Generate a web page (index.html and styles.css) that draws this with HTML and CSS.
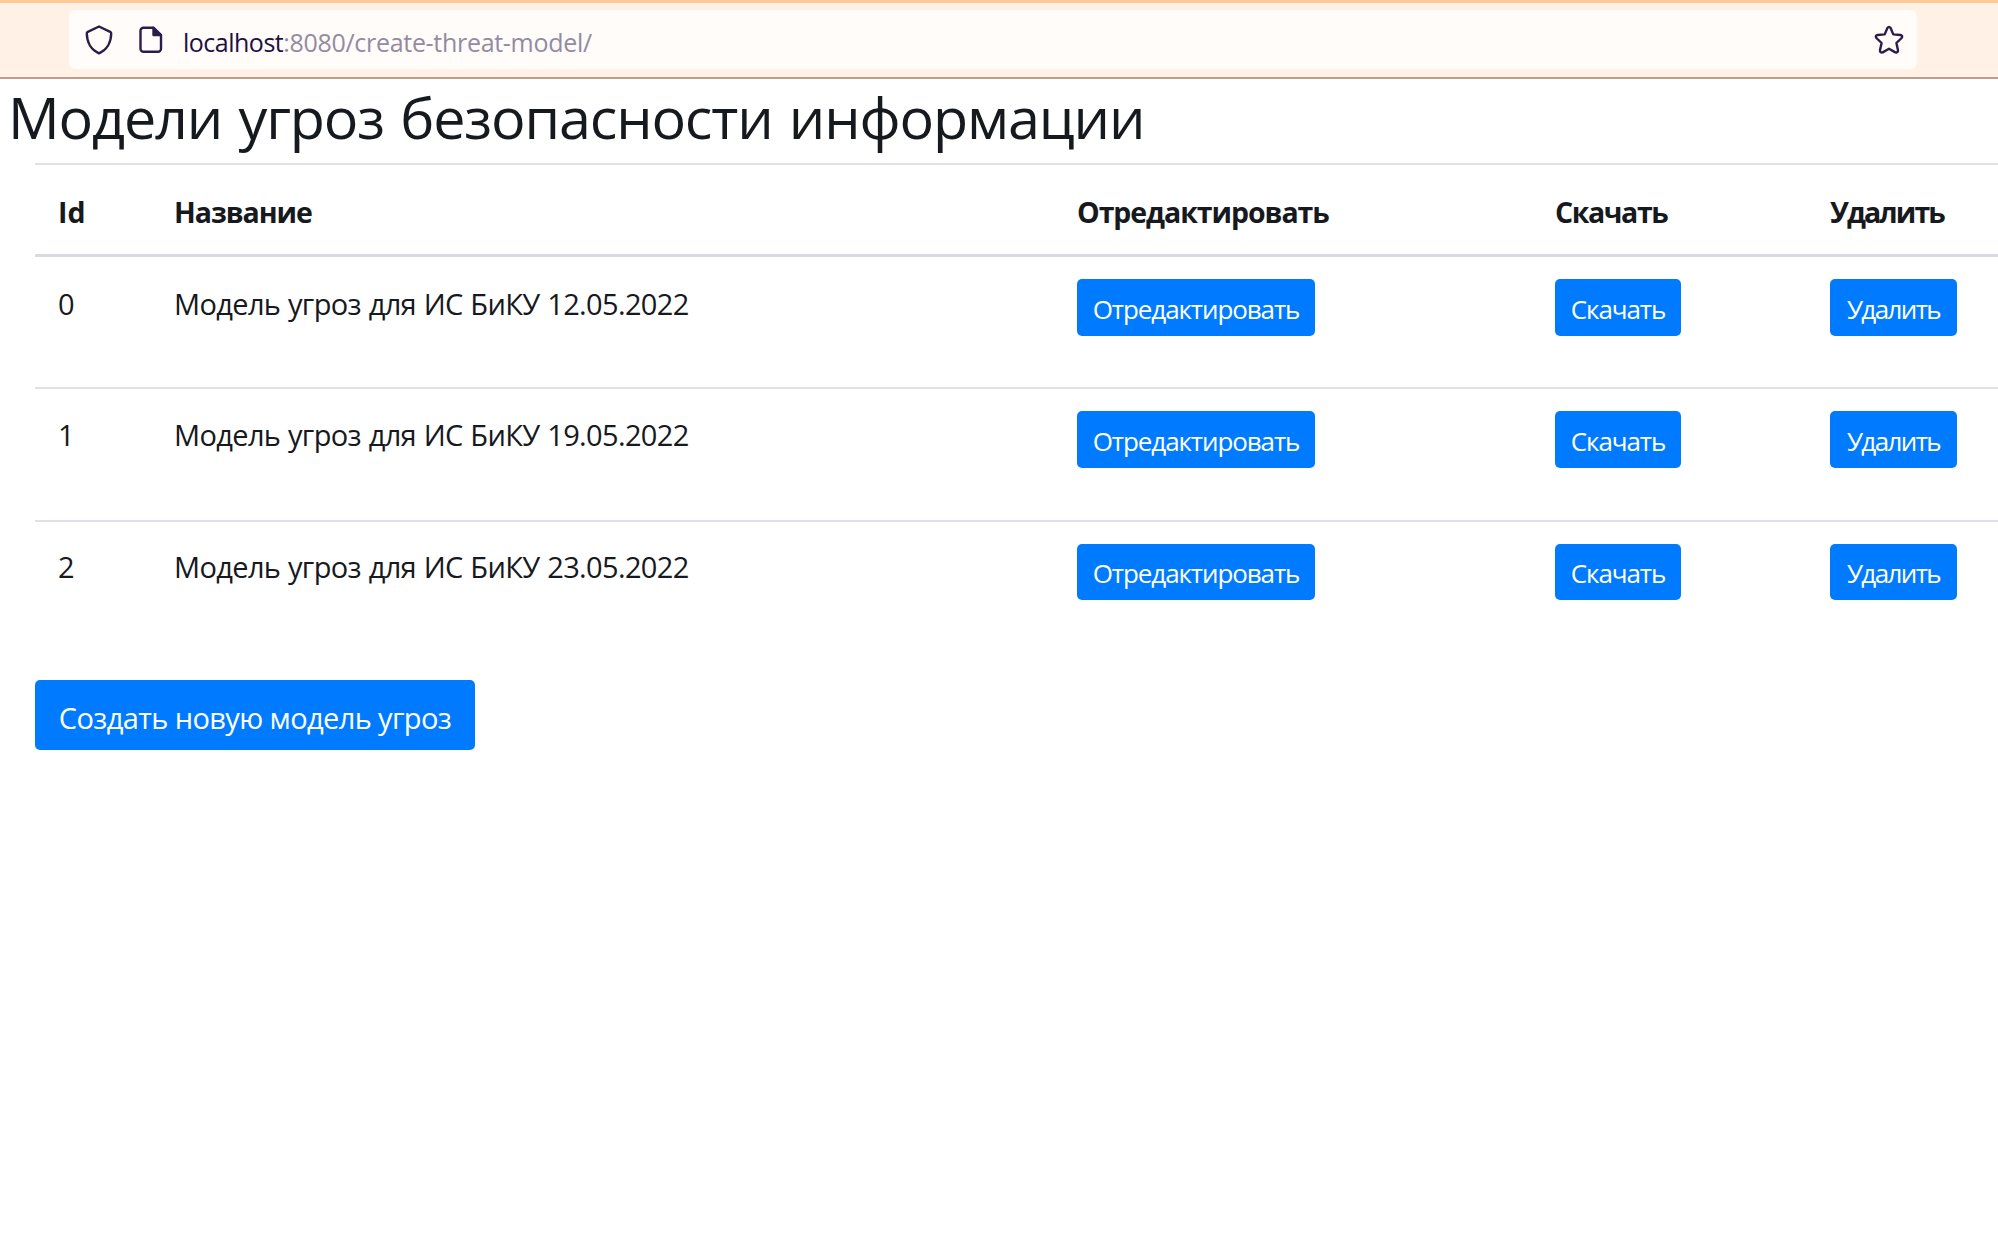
FILE: index.html
```
<!DOCTYPE html>
<html lang="ru">
<head>
<meta charset="utf-8">
<title>Модели угроз</title>
<link rel="stylesheet" href="styles.css">
</head>
<body>
<header class="toolbar">
  <div class="urlbar">
    <svg class="icon-shield" viewBox="0 0 28 30"><path d="M14 1.500L25.200 6.800Q26.300 7.400 26.200 8.600C26 17 23.500 23.500 14 28.400C4.500 23.500 2 17 1.800 8.600Q1.700 7.400 2.800 6.800Z"/></svg>
    <svg class="icon-page" viewBox="0 0 24 28"><path d="M4.500 1.800H14.500L22 9V22.700A3 3 0 0 1 19 25.700H4.500A3 3 0 0 1 1.500 22.700V4.800A3 3 0 0 1 4.500 1.800Z"/><path class="fold" d="M14.500 1.800V9H22Z"/></svg>
    <span class="address"><span class="host">localhost</span><span class="path">:8080/create-threat-model/</span></span>
    <svg class="icon-star" viewBox="0 0 30 30"><path d="M13.400 3Q15 .8 16.600 3L19.300 9.400L26.500 10Q29.200 10.700 27.600 13L22.400 18L24 25.200Q24.100 28 21.300 27.400L15 23.800L8.700 27.400Q5.900 28 6 25.200L7.600 18L2.400 13Q.8 10.700 3.500 10L10.700 9.400Z"/></svg>
  </div>
</header>
<main>
  <h1 class="title">Модели угроз безопасности информации</h1>
  <div class="content">
    <table class="models">
      <thead>
        <tr><th class="c-id">Id</th><th class="c-name">Название</th><th class="c-edit">Отредактировать</th><th class="c-load">Скачать</th><th class="c-del">Удалить</th></tr>
      </thead>
      <tbody>
        <tr class="row-0"><td>0</td><td>Модель угроз для ИС БиКУ 12.05.2022</td><td><button class="btn edit">Отредактировать</button></td><td><button class="btn load">Скачать</button></td><td><button class="btn del">Удалить</button></td></tr>
        <tr class="row-1"><td>1</td><td>Модель угроз для ИС БиКУ 19.05.2022</td><td><button class="btn edit">Отредактировать</button></td><td><button class="btn load">Скачать</button></td><td><button class="btn del">Удалить</button></td></tr>
        <tr class="row-2"><td>2</td><td>Модель угроз для ИС БиКУ 23.05.2022</td><td><button class="btn edit">Отредактировать</button></td><td><button class="btn load">Скачать</button></td><td><button class="btn del">Удалить</button></td></tr>
      </tbody>
    </table>
    <button class="btn create">Создать новую модель угроз</button>
  </div>
</main>
</body>
</html>
```
FILE: styles.css
```
* { box-sizing: border-box; }
body { margin: 0; background: #fff; color: #16191d; font-family: "Open Sans", "Noto Sans", sans-serif; font-size: 29px; overflow-x: hidden; }
.toolbar { height: 79px; padding: 7px 81px 0 69px; background: #fff1e5; border-top: 3px solid #ffc897; border-bottom: 2px solid #bd9c8c; }
.urlbar { display: flex; height: 59px; align-items: flex-start; padding: 15px 13px 0 16px; border-radius: 6px; background: #fffcfa; }
svg { fill: none; stroke: #2b1d49; stroke-width: 2.4; stroke-linejoin: round; flex: none; }
.icon-shield { width: 28px; height: 30px; }
.icon-page { width: 24px; height: 28px; margin: 1px 0 0 26px; }
.fold { fill: #2b1d49; }
.icon-star { width: 30px; height: 30px; margin-left: auto; }
.address { margin-left: 20px; font-size: 25px; line-height: 34px; color: #938ba0; }
.host { color: #20103f; letter-spacing: -0.5px; }
.path { letter-spacing: -0.3px; }
.title { margin: 0; height: 84px; padding-left: 8px; font-size: 57.5px; font-weight: 400; line-height: 77px; letter-spacing: -1.15px; word-spacing: 2.5px; white-space: nowrap; }
.content { padding-left: 35px; }
.models { width: 1993px; border-collapse: collapse; table-layout: fixed; }
th, td { padding: 22px 23px 0; text-align: left; vertical-align: top; line-height: 44px; border-top: 2px solid #dee2e6; white-space: nowrap; }
th { height: 91px; font-size: 28.5px; font-weight: 700; letter-spacing: -1.05px; padding-top: 25px; border-bottom: 3px solid #d8dce0; }
td { height: 133px; letter-spacing: -0.65px; word-spacing: 0.8px; }
.c-id { width: 117px; letter-spacing: 0; }
.c-name { width: 902px; }
.c-edit { width: 478px; }
.c-load { width: 275px; letter-spacing: -1.4px; }
.c-del { letter-spacing: -1.9px; }
td:nth-child(-n+2) { padding-top: 25px; }
td:nth-child(2), .c-name { padding-left: 22px; }
.row-1 td:nth-child(-n+2) { padding-top: 24px; }
.row-2 td { padding-top: 22px; }
.row-2 td:nth-child(-n+2) { padding-top: 23px; }
.btn { display: block; height: 57px; padding: 4px 0 0; border: 0; border-radius: 5px; background: #007bff; color: #fff; font: inherit; font-size: 26px; text-align: center; white-space: nowrap; }
.row-1 .btn { padding-top: 3px; }
.row-2 .btn { height: 56px; padding-top: 2px; }
.edit { width: 238px; letter-spacing: -1.1px; }
.load { width: 126px; letter-spacing: -1.1px; }
.del { width: 127px; letter-spacing: -1.6px; }
.create { width: 440px; height: 70px; margin-top: 26px; font-size: 29px; letter-spacing: -0.62px; }
```
